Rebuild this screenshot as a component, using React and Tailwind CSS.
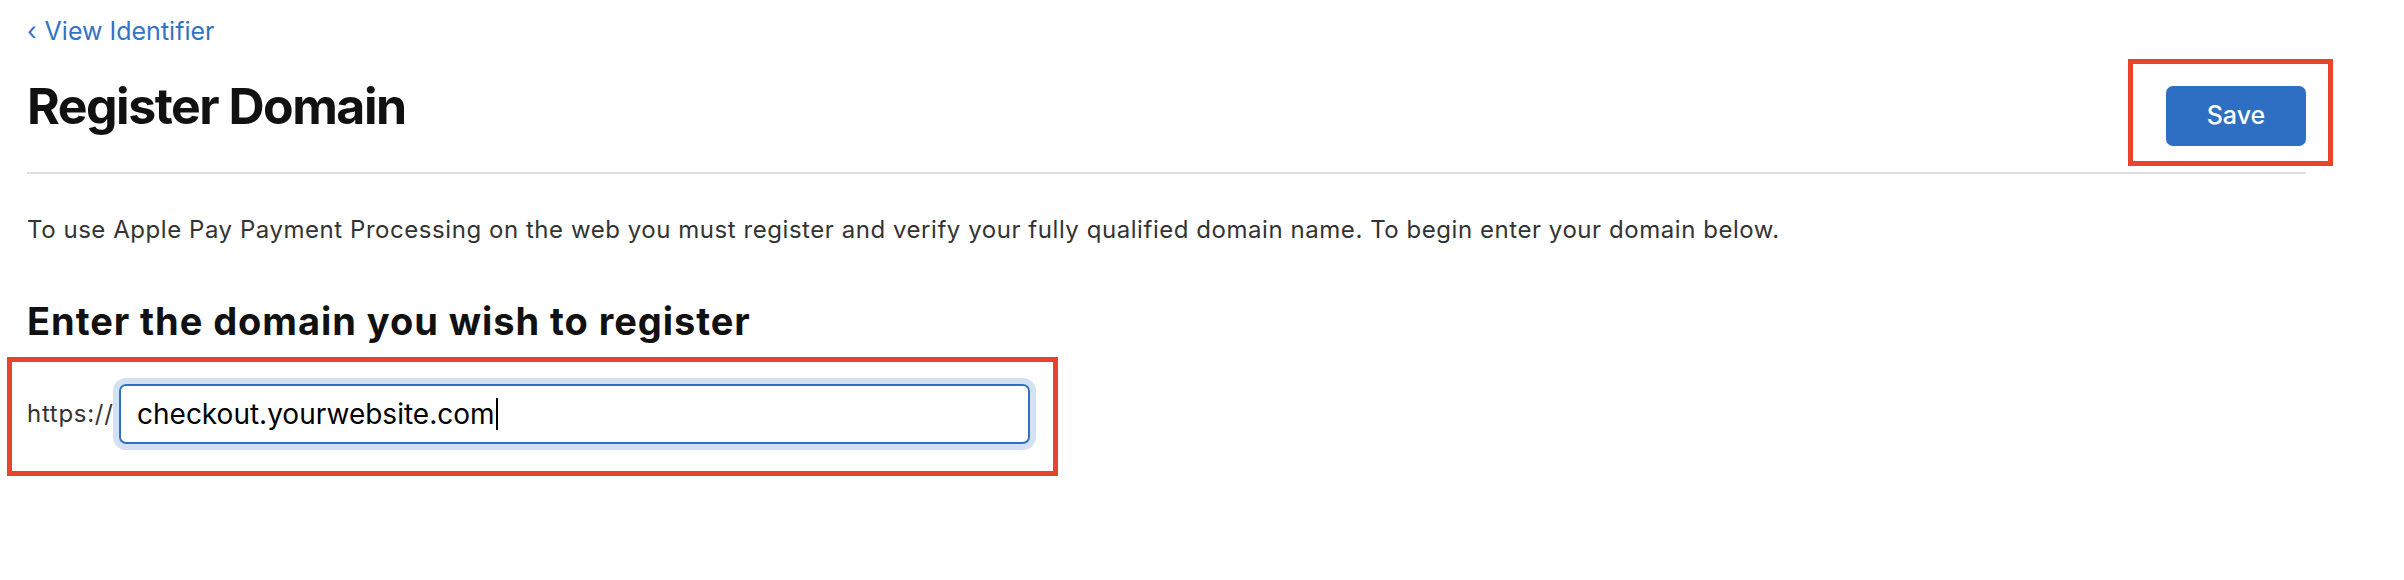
import React from 'react';

const App = () => {
  return (
    <div className="min-h-[580px] bg-white pl-[27px] pr-[98px] pt-[16px] font-['Inter','Liberation_Sans',sans-serif]">
      {/* Back link */}
      <a href="#" className="block text-[25px] leading-[30px] text-[#3373c4]">
        <span className="mr-[8px]">‹</span>View Identifier
      </a>

      {/* Header */}
      <div className="mt-[30px] flex items-start justify-between">
        <h1 className="text-[50px] leading-[60px] font-bold tracking-[-1.5px] text-[#111111]">Register Domain</h1>
        <div className="relative mt-[10px]">
          <button className="h-[60px] w-[140px] rounded-[7px] bg-[#2f6fc3] text-[25px] font-medium text-white">
            Save
          </button>
          <div className="pointer-events-none absolute -top-[27px] -right-[27px] -bottom-[20px] -left-[38px] border-[5px] border-[#e8432b]"></div>
        </div>
      </div>

      <div className="mt-[26px] border-t-2 border-[#dedede]"></div>

      <p className="mt-[42px] text-[24px] leading-[28px] tracking-[0.55px] text-[#333333]">
        To use Apple Pay Payment Processing on the web you must register and verify your fully qualified domain name. To begin enter your domain below.
      </p>

      <h2 className="mt-[55px] text-[38px] leading-[44px] font-bold tracking-[0.95px] text-[#111111]">Enter the domain you wish to register</h2>

      {/* Domain input */}
      <div className="relative mt-[41px] inline-flex items-center">
        <span className="w-[92px] text-[24px] tracking-[0.7px] text-[#333333]">https://</span>
        <div className="flex h-[60px] w-[911px] items-center rounded-[7px] border-2 border-[#3070c4] pl-[16px] shadow-[0_0_0_6px_#d3e1f3]">
          <span className="text-[28px] text-black">checkout.yourwebsite.com</span>
          <span className="ml-[1px] h-[32px] w-[2px] bg-black"></span>
        </div>
        <div className="pointer-events-none absolute -top-[27px] -right-[28px] -bottom-[32px] -left-[20px] border-[5px] border-[#e8432b]"></div>
      </div>
    </div>
  );
};

export default App;
